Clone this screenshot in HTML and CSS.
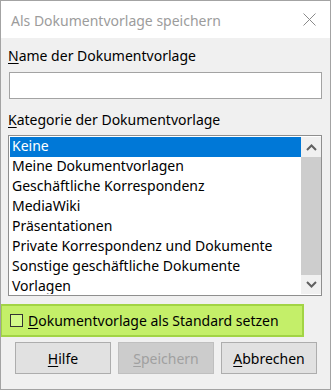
FILE: index.html
```html
<!DOCTYPE html>
<html lang="de">
<head>
<meta charset="utf-8">
<link rel="stylesheet" href="styles.css">
</head>
<body>
<div class="window">
  <div class="titlebar">
    <span class="title">Als Dokumentvorlage speichern</span>
    <svg class="close" width="13" height="13" viewBox="0 0 13 13"><path d="M0.5 0.5 L12.5 12.5 M12.5 0.5 L0.5 12.5" stroke="#8a8a8a" stroke-width="1" fill="none"/></svg>
  </div>
  <div class="content">
    <div class="label label-first"><u>N</u>ame der Dokumentvorlage</div>
    <div class="input"></div>
    <div class="label label-second"><u>K</u>ategorie der Dokumentvorlage</div>
    <div class="list">
      <div class="items">
        <div class="item selected">Keine</div>
        <div class="item">Meine Dokumentvorlagen</div>
        <div class="item">Geschäftliche Korrespondenz</div>
        <div class="item">MediaWiki</div>
        <div class="item">Präsentationen</div>
        <div class="item">Private Korrespondenz und Dokumente</div>
        <div class="item">Sonstige geschäftliche Dokumente</div>
        <div class="item item-last">Vorlagen</div>
      </div>
      <div class="scrollbar">
        <div class="arrow">
          <svg width="11" height="7" viewBox="0 0 11 7"><path d="M1 6 L5.5 1.5 L10 6" stroke="#606060" stroke-width="2" fill="none"/></svg>
        </div>
        <div class="thumb"></div>
        <div class="arrow arrow-down">
          <svg width="11" height="7" viewBox="0 0 11 7"><path d="M1 1 L5.5 5.5 L10 1" stroke="#606060" stroke-width="2" fill="none"/></svg>
        </div>
      </div>
    </div>
    <div class="highlight">
      <span class="checkbox"></span>
      <span class="check-label"><u>D</u>okumentvorlage als Standard setzen</span>
    </div>
    <div class="buttons">
      <div class="button"><u>H</u>ilfe</div>
      <div class="button disabled"><u>S</u>peichern</div>
      <div class="button"><u>A</u>bbrechen</div>
    </div>
  </div>
</div>
</body>
</html>
```
FILE: styles.css
```css
html, body {
  margin: 0;
  padding: 0;
}
body {
  width: 331px;
  height: 390px;
  font-family: "Noto Sans", "Open Sans", sans-serif;
  font-size: 14px;
  color: #000;
}
u {
  text-decoration: underline;
  text-underline-offset: 2px;
}
.window {
  box-sizing: border-box;
  width: 331px;
  height: 390px;
  border: 1px solid #a3a3a3;
  background: #f0f0f0;
  overflow: hidden;
}
.titlebar {
  height: 37px;
  background: #fff;
  display: flex;
  align-items: center;
  justify-content: space-between;
  padding: 0 14px 0 10px;
}
.title {
  color: #9c9c9c;
  font-size: 14px;
  margin-top: 1px;
}
.close {
  display: block;
}
.content {
  padding: 8px 8px 0 7px;
}
.label {
  height: 20px;
  line-height: 20px;
}
.input {
  box-sizing: border-box;
  margin: 6px 0 0 1px;
  height: 27px;
  background: #fff;
  border: 1px solid #a3a3a3;
}
.label-second {
  margin-top: 11px;
}
.list {
  box-sizing: border-box;
  margin-top: 5px;
  height: 161px;
  background: #fff;
  border: 1px solid #8e8e8e;
  padding: 1px 0 1px 1px;
  display: flex;
  overflow: hidden;
}
.items {
  flex: 1;
  overflow: hidden;
}
.item {
  height: 20px;
  line-height: 17px;
  padding-left: 2px;
  white-space: nowrap;
}
.item-last {
  height: 17px;
}
.selected {
  background: #0078d7;
  color: #fff;
}
.scrollbar {
  width: 20px;
  display: flex;
  flex-direction: column;
  background: #f0f0f0;
}
.arrow {
  height: 20px;
  display: flex;
  align-items: center;
  justify-content: center;
}
.arrow-down {
  height: 19px;
}
.arrow svg {
  display: block;
}
.thumb {
  flex: 1;
  background: #cdcdcd;
}
.highlight {
  box-sizing: border-box;
  margin: 8px 0 0 -8px;
  width: 304px;
  height: 33px;
  background: #c4ef69;
  border: 2px solid #a2d444;
  display: flex;
  align-items: center;
  padding-left: 8px;
}
.checkbox {
  box-sizing: border-box;
  width: 13px;
  height: 13px;
  border: 1px solid #333;
  background: #d4fa8a;
  margin-right: 5px;
}
.check-label {
  line-height: 20px;
}
.buttons {
  display: flex;
  gap: 7px;
  margin-top: 5px;
  padding-left: 7px;
}
.button {
  box-sizing: border-box;
  width: 96px;
  height: 32px;
  background: #e1e1e1;
  border: 1px solid #adadad;
  display: flex;
  align-items: center;
  justify-content: center;
}
.disabled {
  background: #cccccc;
  border-color: #bfbfbf;
  color: #a0a0a0;
}
```
